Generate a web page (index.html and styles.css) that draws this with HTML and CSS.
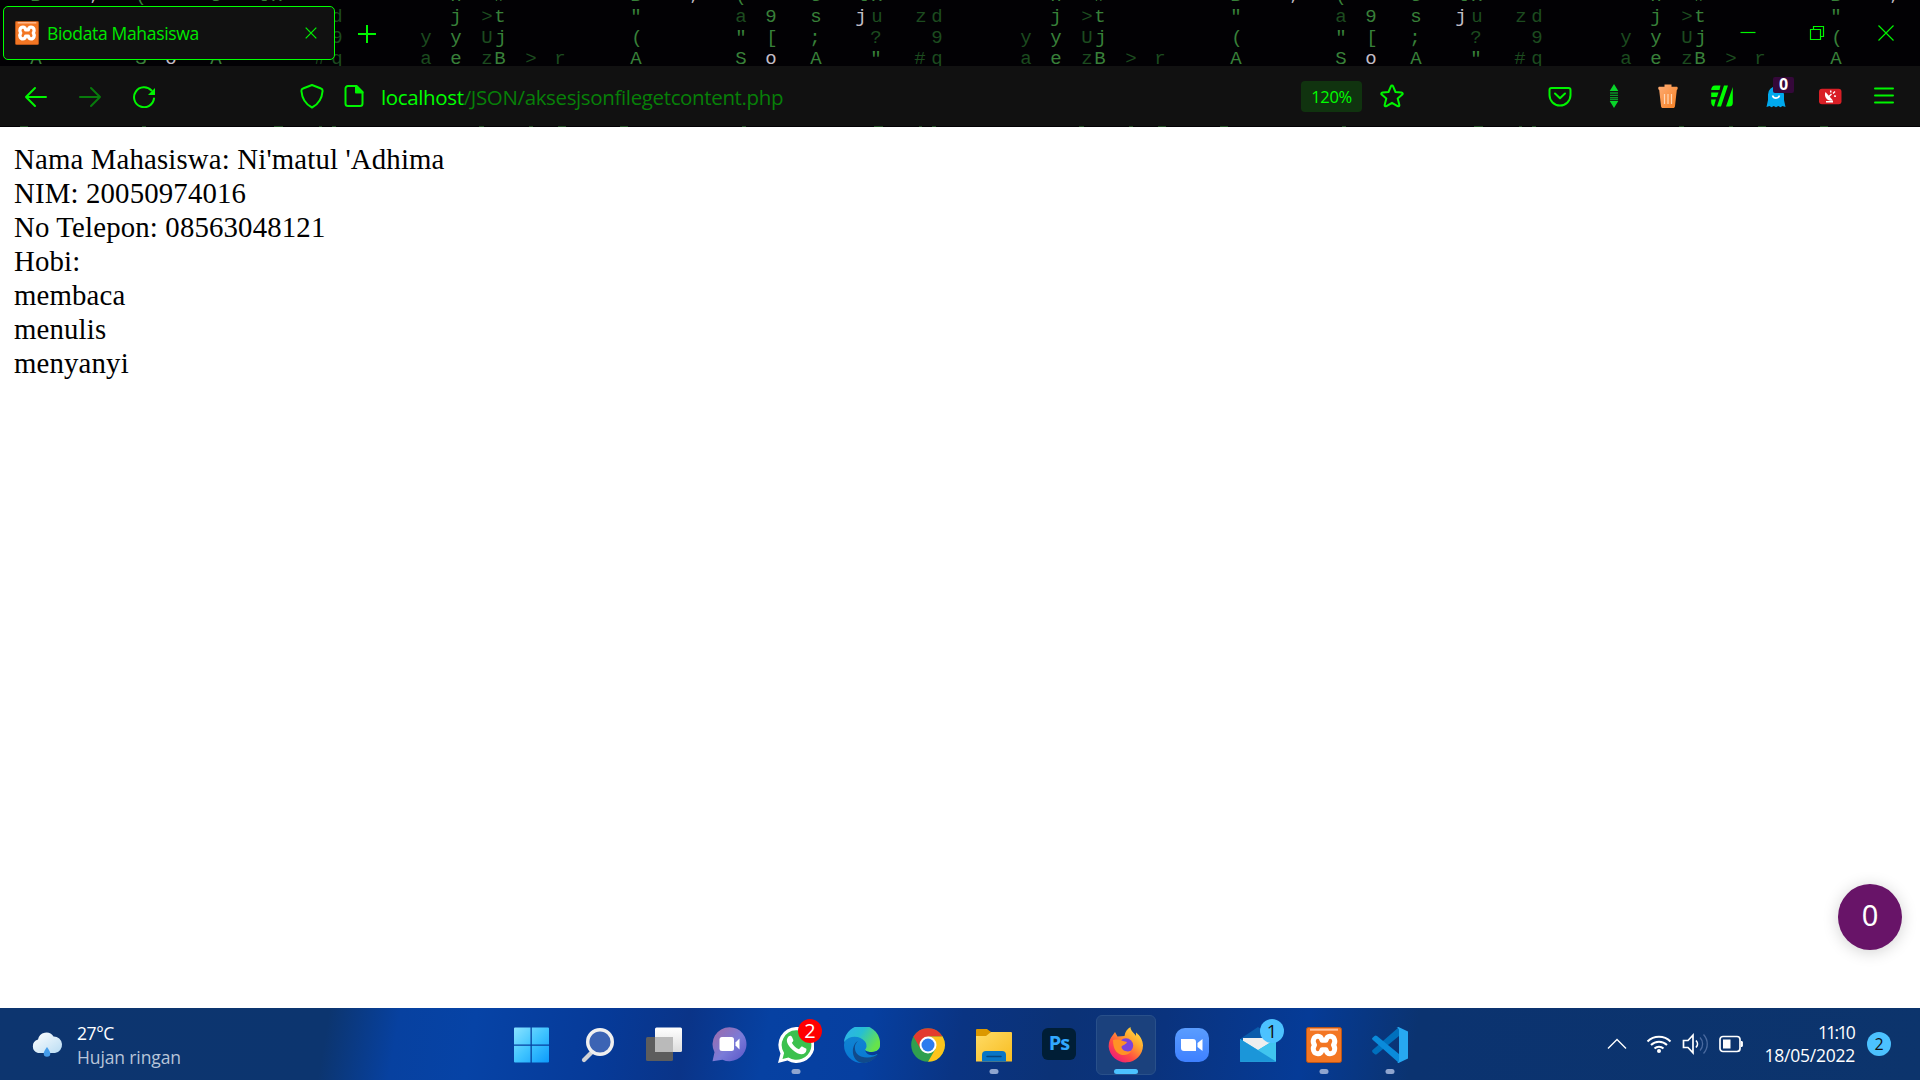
FILE: index.html
```html
<!DOCTYPE html>
<html lang="id">
<head>
<meta charset="utf-8">
<title>Biodata Mahasiswa</title>
<link rel="stylesheet" href="styles.css">
</head>
<body>
<div class="screen">
  <header class="chrome">
    <svg class="rain" width="1920" height="127" aria-hidden="true">
      <defs>
        <g id="rain-tile">
          <text class="g2" y="1"><tspan x="56">h</tspan><tspan x="100">#</tspan><tspan x="236">B</tspan><tspan x="341">(</tspan><tspan x="416">s</tspan><tspan x="462">l</tspan><tspan x="477">x</tspan></text>
          <text class="gw" y="0"><tspan x="146">.</tspan><tspan x="295">,</tspan><tspan x="371">'</tspan></text>
          <text class="g2" y="22"><tspan x="56">j</tspan><tspan x="100">t</tspan><tspan x="236">"</tspan><tspan x="371">9</tspan><tspan x="416">s</tspan></text>
          <text class="g1" y="22"><tspan x="87">&gt;</tspan><tspan x="341">a</tspan><tspan x="477">u</tspan><tspan x="521">z</tspan><tspan x="537">d</tspan></text>
          <text class="gw" y="22"><tspan x="461">j</tspan></text>
          <text class="g2" y="43"><tspan x="56">y</tspan><tspan x="101">j</tspan><tspan x="237">(</tspan><tspan x="341">"</tspan><tspan x="372">[</tspan><tspan x="415">;</tspan></text>
          <text class="g1" y="43"><tspan x="26">y</tspan><tspan x="87">U</tspan><tspan x="476">?</tspan><tspan x="537">9</tspan></text>
          <text class="g2" y="64"><tspan x="56">e</tspan><tspan x="100">B</tspan><tspan x="236">A</tspan><tspan x="341">S</tspan><tspan x="416">A</tspan><tspan x="476">"</tspan></text>
          <text class="g1" y="64"><tspan x="26">a</tspan><tspan x="87">z</tspan><tspan x="131">&gt;</tspan><tspan x="160">r</tspan><tspan x="520">#</tspan><tspan x="537">q</tspan></text>
          <text class="gw" y="64"><tspan x="371">o</tspan></text>
          <path d="M79 126.5h5m45 0h4m25 0h8m54 0h8m114 0h4m128 0h9m36 0h3m10 0h4" stroke="#1e4a20"/>
        </g>
      </defs>
      <use href="#rain-tile" x="-200"/><use href="#rain-tile" x="400"/><use href="#rain-tile" x="1000"/><use href="#rain-tile" x="1600"/>
    </svg>

    <div class="tabstrip">
      <div class="tab">
        <svg class="favicon" viewBox="0 0 36 36"><use href="#xampp"/></svg>
        <span class="tab-title">Biodata Mahasiswa</span>
        <svg width="12" height="12" viewBox="0 0 12 12" class="line thin"><path d="M.7.7l10.600 10.600M11.300.7L.7 11.300"/></svg>
      </div>
      <svg class="newtab line" width="18" height="18" viewBox="0 0 18 18"><path d="M9 .5v17M.5 9h17"/></svg>
      <div class="winctl">
        <svg width="16" height="16" viewBox="0 0 16 16" class="line thin"><path d="M.5 7.500h15"/></svg>
        <svg width="16" height="16" viewBox="0 0 16 16" class="line thin"><path d="M1.500 4.500h10v10h-10zM4.500 4.500v-3h10v10h-3"/></svg>
        <svg width="16" height="16" viewBox="0 0 16 16" class="line thin"><path d="M.5.5l15 15M15.500.5l-15 15"/></svg>
      </div>
    </div>

    <div class="toolbar">
      <div class="tools">
        <svg viewBox="0 0 24 24" class="line"><path d="M22 13H2M11 4L2 13l9 9"/></svg>
        <svg viewBox="0 0 24 24" class="line dim"><path d="M2 13h20M13 4l9 9-9 9"/></svg>
        <svg viewBox="0 0 24 24" class="line"><path d="M22 14.500a10 10 0 1 1-2.500-8"/><path d="M23 4v7h-7z" fill="#00f500" stroke="none"/></svg>
      </div>
      <div class="urlbar">
        <svg width="24" height="26" viewBox="0 0 24 26" class="line"><path d="M12 2l9 3.500c1.500.5 1.700 1 1.600 2.500C22 15 19 21 12 24.500 5 21 2 15 1.400 8c-.1-1.500.1-2 1.600-2.500z"/></svg>
        <svg class="page-ico line" width="20" height="24" viewBox="0 0 20 24"><path d="M4 2h8.500L18.500 8v11.500a2.500 2.500 0 0 1-2.500 2.500H4a2.500 2.500 0 0 1-2.500-2.500v-15A2.500 2.500 0 0 1 4 2z"/><path d="M12 2v6.500h6.500z" fill="#00f500"/></svg>
        <span class="url"><span class="host">localhost</span><span class="path">/JSON/aksesjsonfilegetcontent.php</span></span>
        <span class="zoom">120%</span>
        <svg width="24" height="24" viewBox="0 0 24 24" class="line"><path d="M12 1.500c.5 0 .9.300 1.100.8L15.500 8l6 .6c1.200.1 1.600 1.200.8 2L17.700 14.500l1.600 6.200c.3 1.300-.7 2-1.800 1.400L12 18.800l-5.500 3.300c-1.100.6-2.100-.1-1.800-1.400l1.600-6.200L1.700 10.600c-.8-.8-.4-1.900.8-2l6-.6L10.900 2.300c.2-.5.6-.8 1.100-.8z"/></svg>
      </div>
      <div class="tools">
        <svg viewBox="0 0 24 24" class="line"><path d="M3.500 4h17c1.300 0 2 .7 2 2v5a10.500 10.500 0 0 1-21 0V6c0-1.300.7-2 2-2z"/><path d="M7 9.500l5 4.700 5-4.700"/></svg>
        <svg viewBox="0 0 24 24"><path d="M12 0l4.300 7H7.700zM12 24l4.300-7H7.700z" fill="#09d42a"/><path d="M8 9h8M8 11.300h8M8 13.600h8M8 15.500h8" stroke="#0a9426" stroke-width="1.300"/></svg>
        <svg viewBox="0 0 24 24"><defs><linearGradient id="tr" x1="0" y1="0" x2="1" y2="1"><stop stop-color="#ffad75"/><stop offset="1" stop-color="#f58023"/></linearGradient></defs><path d="M8.500.5h7v2.200h5.500c1 0 1 3-.2 3.200L19 22c-.2 1.500-.8 2-2 2H7c-1.200 0-1.800-.5-2-2L3.200 5.900c-1.200-.2-1.200-3.200-.2-3.200h5.500z" fill="url(#tr)"/><path d="M8.500 10v10M12 10v10M15.500 10v10" stroke="#ffd7b5" stroke-width="1.200"/></svg>
        <svg viewBox="0 0 24 24" fill="#0f0"><path d="M5 1.500h5.500L9.500 6H1.200c0-2.500 1.500-4.500 3.800-4.500zM1.200 8.500h7.300L7 13H1.200zM1.200 15.500h4.700L4 22.500c-1.700-.5-2.800-2-2.800-4.500zM14 1.500h4l-7 21H7zM22.800 3v16c0 2.500-1.500 3.500-3.800 3.500h-3z"/></svg>
        <span class="ghost">
          <svg viewBox="0 0 24 24"><path d="M4 10.500a8 8 0 0 1 16 0V16l1.500 7-3-1-2 1.300-2.200-1.300-2.300 1.300L9.700 22l-2.200 1.300L5.500 22l-3 1L4 16z" fill="#00a9ee"/><path d="M8.500 11.500c1 3.500 6 3.500 7 0" fill="none" stroke="#fff" stroke-width="1.600"/></svg>
          <span class="ghost-count">0</span>
        </span>
        <svg viewBox="0 0 24 24"><rect x="1" y="4.800" width="22.500" height="15.500" rx="3" fill="#d91f26"/><path d="M7.500 8c-2 4.500 1.500 9.800 7.500 8.500z" fill="#fff"/><path d="M11 12.500l2.500-2.500M12.500 6.500l.5 2M15 9.500l2-2M16 12l2 .3M8 17.700h7" stroke="#fff" stroke-width="1.400"/></svg>
        <svg viewBox="0 0 24 24" class="line"><path d="M3 4.500h18M3 11.500h18M3 18.500h18"/></svg>
      </div>
    </div>
  </header>

  <main class="page">
    Nama Mahasiswa: Ni'matul 'Adhima<br>
    NIM: 20050974016<br>
    No Telepon: 08563048121<br>
    Hobi:<br>
    membaca<br>
    menulis<br>
    menyanyi
    <div class="bubble">0</div>
  </main>

  <footer class="taskbar">
    <div class="weather">
      <svg width="34" height="28" viewBox="0 0 34 28"><defs><linearGradient id="cl" x1="0" y1="0" x2="1" y2="1"><stop stop-color="#fff"/><stop offset="1" stop-color="#b9dcf3"/></linearGradient></defs><path d="M8 22a7 7 0 0 1 0-13.500 8.500 8.500 0 0 1 15.500-3A8.300 8.300 0 0 1 25 22z" fill="url(#cl)"/><path d="M17 16c2 3 3.300 4.700 3.300 6.500a3.300 3.300 0 0 1-6.600 0c0-1.800 1.300-3.500 3.300-6.500z" fill="#459deb"/></svg>
      <div class="weather-text"><div>27°C</div><div class="muted">Hujan ringan</div></div>
    </div>

    <div class="apps">
      <div class="app"><svg viewBox="0 0 36 36"><defs><linearGradient id="wn" gradientUnits="userSpaceOnUse" x1="0" y1="0" x2="36" y2="36"><stop stop-color="#8be3ff"/><stop offset=".5" stop-color="#3fc4ff"/><stop offset="1" stop-color="#0a98fb"/></linearGradient></defs><path d="M1 .5h15.500v17H0v-16a1 1 0 0 1 1-1zM17.800.5H34a1 1 0 0 1 1 1v16H17.800zM0 18.800h16.500v16.700H1a1 1 0 0 1-1-1zM17.800 18.800H35v15.700a1 1 0 0 1-1 1H17.800z" fill="url(#wn)"/></svg></div>
      <div class="app"><svg viewBox="0 0 36 36"><path d="M4 33l9-9" stroke="#d0d2d6" stroke-width="4.200" stroke-linecap="round"/><circle cx="20" cy="15" r="12.300" fill="#3c64b4" stroke="#f0f0f0" stroke-width="3.400"/></svg></div>
      <div class="app"><svg viewBox="0 0 36 36"><defs><linearGradient id="tv" x1="0" y1="0" x2="0" y2="1"><stop stop-color="#fff"/><stop offset="1" stop-color="#ddd"/></linearGradient></defs><rect x="0" y="10" width="27" height="24" rx="1.500" fill="#5d5d5d"/><rect x="9" y=".5" width="27" height="24.500" rx="1.500" fill="url(#tv)"/><path d="M9 10h18v15H9z" fill="#bababa"/></svg></div>
      <div class="app"><svg viewBox="0 0 36 36"><defs><linearGradient id="ct" x1="0" y1="0" x2="1" y2="1"><stop stop-color="#a06aa6"/><stop offset=".55" stop-color="#7a7bd8"/><stop offset="1" stop-color="#5955c8"/></linearGradient></defs><path d="M17.500.2a17 17 0 1 1-7 32.500L.5 34.200l2-9A17 17 0 0 1 17.500.2z" fill="url(#ct)"/><rect x="7.500" y="10" width="14.500" height="14" rx="2.500" fill="#fff"/><path d="M23.500 15.500l4-4v11l-4-4z" fill="#fff"/></svg></div>
      <div class="app running"><svg viewBox="0 0 36 36"><path d="M18 0a18 18 0 1 1-8.500 33.500L0 36l2.500-9.500A18 18 0 0 1 18 0z" fill="#fff"/><path d="M18 3.200a14.800 14.800 0 1 1-7.500 27.200L4.500 32l1.600-6A14.800 14.800 0 0 1 18 3.200z" fill="#3cc14e"/><path d="M10.500 9.500c1.500-1.500 3-.8 3.500.5l1.300 3c.3 1-.7 2-1.500 2.800 2 3.500 4 5.300 7.200 6.500l2-2.300c.6-.7 1.200-.5 2 0l3 1.600c1 .6.400 4-2 5.100-2.500 1.200-7 .1-11.500-4-5-4.600-7.500-9.700-4-13.200z" fill="#fff"/></svg><span class="badge red">2</span></div>
      <div class="app"><svg viewBox="0 0 36 36"><defs><linearGradient id="e1" x1="0" y1="0" x2="1" y2=".5"><stop stop-color="#2eaef0"/><stop offset=".5" stop-color="#27bfd2"/><stop offset="1" stop-color="#66e34b"/></linearGradient><linearGradient id="e2" x1="0" y1="0" x2="0" y2="1"><stop stop-color="#1389d0"/><stop offset="1" stop-color="#0878d5"/></linearGradient></defs><circle cx="18" cy="18" r="18" fill="url(#e2)"/><path d="M0 15A18 18 0 0 1 36 18c0 5-4 7-8.500 7-5 0-6.500-1.500-6.300-2.700 2-2 1.500-5.500-.2-7.800C16 8 5 8 0 15z" fill="url(#e1)"/><path d="M14 14c-5 4-4 13 3 15.500 6.500 2.300 14 .5 17.500-3C30 35 21 37.500 15 35 6 30 8 17 14 14z" fill="#114a8b"/><path d="M21.200 22.300c-.2 1.200 1.300 2.700 6.300 2.700 4 0 7-1.500 8.200-4.500V27H33c-6 3-12 0-11.800-4.700z" fill="#073c97"/></svg></div>
      <div class="app"><svg viewBox="0 0 36 36"><circle cx="18" cy="18" r="16.800" fill="#2f9f4e"/><path d="M3.500 9.600A16.800 16.800 0 0 1 32.600 9.600H18L10.700 22.200z" fill="#e33b2e"/><path d="M32.600 9.600A16.800 16.800 0 0 1 18 34.800l7.300-12.600L18 9.600z" fill="#fcc41c"/><circle cx="18" cy="18" r="8.500" fill="#fff"/><circle cx="18" cy="18" r="6.500" fill="#2d7cee"/></svg></div>
      <div class="app running"><svg viewBox="0 0 36 36"><defs><linearGradient id="fd" x1="0" y1="0" x2="1" y2="1"><stop stop-color="#ffdb66"/><stop offset="1" stop-color="#f8bd20"/></linearGradient></defs><path d="M0 3a1 1 0 0 1 1-1h10l4 3-3 6H0z" fill="#dc9800"/><path d="M0 9h10l5-4h20a1 1 0 0 1 1 1v28.500H0z" fill="url(#fd)"/><path d="M6 34.500V28a4 4 0 0 1 4-4h16a4 4 0 0 1 4 4v6.500z" fill="#0875c5"/><path d="M11 29.500h14" stroke="#07457c" stroke-width="1.500" stroke-linecap="round"/></svg></div>
      <div class="app"><span class="ps">Ps</span></div>
      <div class="app active"><svg viewBox="0 0 36 36"><defs><linearGradient id="ff" x1="1" y1="0" x2=".2" y2="1"><stop stop-color="#fff04a"/><stop offset=".4" stop-color="#ffa52d"/><stop offset=".7" stop-color="#ff4d43"/><stop offset="1" stop-color="#ed1580"/></linearGradient></defs><path d="M4.500 8.500L7 5l2.500 4.500 7-.5c.5-4 3-7.500 6-9 0 4 3.500 5.500 5.500 9V5.500c4 3 7 8 7 13A17.200 17.200 0 0 1 .7 20C.5 15 2 11.500 4.500 8.500z" fill="url(#ff)"/><circle cx="18" cy="18.500" r="7.200" fill="#7944dc"/><path d="M5 13c5-1 8 0 10 1l4 1c-1 3-5 3-5.500 5 .5 4 6 5.500 10 3.500-2 4-7 5.500-11 4S5 22 5 13z" fill="#ff9226"/></svg></div>
      <div class="app"><svg viewBox="0 0 36 36"><defs><linearGradient id="zm" x1="0" y1="0" x2="0" y2="1"><stop stop-color="#5a9dff"/><stop offset="1" stop-color="#3e80ff"/></linearGradient></defs><rect x="1" y="1" width="34" height="34" rx="10" fill="url(#zm)"/><path d="M7 12h12a3 3 0 0 1 3 3v9H10a3 3 0 0 1-3-3zM23.500 16l5-4v12l-5-4z" fill="#fff"/></svg></div>
      <div class="app"><svg viewBox="0 0 36 36"><path d="M0 12L18 0l18 12v13H0z" fill="#0a5bab"/><path d="M3 11h30v14L18 27 3 15z" fill="#eee"/><path d="M0 12l18 11 18-11v22.500H0z" fill="#28b7ea"/><path d="M0 34.500L36 12v22.500z" fill="#40c5ef"/><path d="M0 12l36 22.500H0z" fill="#1b96d9"/></svg><span class="badge blue">1</span></div>
      <div class="app running"><svg viewBox="0 0 36 36"><defs><g id="xampp"><rect x=".5" y=".5" width="35" height="35" rx="2" fill="#f37623" stroke="#b95518"/><path d="M4 2.700h28" stroke="#ffc09a" stroke-width="2"/><path d="M12 9.300c2.500 0 3.500 1.500 4 4h4c.5-2.500 1.500-4 4-4 4.500 0 6 5 3.500 8.700C30 21.700 28.500 26.700 24 26.700c-2.500 0-3.500-1.500-4-4h-4c-.5 2.500-1.500 4-4 4-4.500 0-6-5-3.500-8.700C6 14.300 7.500 9.300 12 9.300z" fill="#f37623" stroke="#fff" stroke-width="5" stroke-linejoin="round"/></g></defs><use href="#xampp"/></svg></div>
      <div class="app running"><svg viewBox="0 0 36 36"><path d="M27 0v9L5 27c-1 .8-1.700.7-2.500 0L.6 25.200c-.7-.7-.7-1.500 0-2.200z" fill="#0070bd"/><path d="M.6 10.700L2.500 9c.8-.8 1.500-.8 2.500 0l22 18v9L.6 12.800c-.7-.6-.7-1.500 0-2.100z" fill="#0a8bdb"/><path d="M26.500 0L36 4.500v27L26.500 36c-.5-.3-1.500-.5-2-1 1.500.5 2.500 0 2.500-2V3c0-1.500-1-2-2.500-2z" fill="#27a8f1"/></svg></div>
    </div>

    <div class="tray">
      <svg width="20" height="12" viewBox="0 0 20 12"><path d="M1 10.500L10 1.500l9 9" stroke-width="1.400"/></svg>
      <svg class="wifi" width="26" height="20" viewBox="0 0 26 20" stroke-width="2"><path d="M1.500 7.500a16.500 16.500 0 0 1 23 0M5 11a11.500 11.500 0 0 1 16 0M8.500 14.500a6.500 6.500 0 0 1 9 0"/><circle cx="13" cy="17" r="2" fill="#fff" stroke="none"/></svg>
      <svg class="vol" width="26" height="22" viewBox="0 0 26 22" stroke-width="1.700"><path d="M1.500 7.500H6l5-5.300v17.600l-5-5.300H1.500zM14 7.500a5 5 0 0 1 0 7"/><path d="M18 4.500c3.500 3.500 3.500 9.500 0 13M21.500 1.500c5 5.500 5 13.500 0 19" stroke="#4a6a9f" stroke-width="1.300"/></svg>
      <svg class="bat" width="25" height="18" viewBox="0 0 25 18" stroke-width="1.700"><rect x="1" y="1.500" width="20" height="15" rx="3"/><path d="M4 4.500h7.500v9H4zM22 6h1.500v6H22z" fill="#fff" stroke="none"/><path d="M23 7v4"/></svg>
      <div class="clock"><div class="time">11:10</div><div class="date">18/05/2022</div></div>
      <span class="count">2</span>
    </div>
  </footer>
</div>
</body>
</html>
```
FILE: styles.css
```css
* { box-sizing: border-box; }
body { margin: 0; background: #fff; overflow: hidden; }
.screen {
  width: 1920px; height: 1080px;
  display: flex; flex-direction: column;
  font-family: "Open Sans", "Noto Sans", sans-serif;
}
svg { display: block; flex: none; }

/* browser header */
.chrome { position: relative; height: 127px; background: #020104; flex: none; }
.rain { position: absolute; inset: 0; }
.rain text { font: 19px "Liberation Mono", monospace; text-anchor: middle; }
.g1 { fill: #1c4b1f; }
.g2 { fill: #388039; }
.gw { fill: #c2bec6; }
.tabstrip { position: relative; height: 66px; display: flex; align-items: center; padding-left: 3px; }
.tab {
  width: 332px; height: 54px; display: flex; align-items: center;
  padding: 0 17px 0 11px; background: #111; border: 1px solid #0f0; border-radius: 5px;
}
.favicon { width: 24px; height: 24px; }
.tab-title { flex: 1; margin-left: 8px; color: #00e800; font-size: 17.500px; letter-spacing: -.33px; white-space: nowrap; }
.line { fill: none; stroke: #00f500; stroke-width: 2; stroke-linecap: round; stroke-linejoin: round; }
.thin { stroke-width: 1.2; stroke-linecap: butt; stroke-linejoin: miter; }
.dim { stroke: #087b0c; }
.newtab { margin: 2px 0 0 23px; }
.winctl { margin-left: auto; display: flex; gap: 53px; padding-right: 26px; }

.toolbar { position: relative; height: 60px; background: #111; display: flex; align-items: center; padding: 0 9px; }
.tools { display: flex; align-items: center; }
.tools svg { width: 24px; height: 24px; margin: 0 15px; }
.urlbar { flex: 1; display: flex; align-items: center; padding: 0 129px; }
.page-ico { margin-left: 20px; }
.url { margin-left: 17px; padding-top: 2px; flex: 1; font-size: 20.500px; letter-spacing: -.36px; white-space: nowrap; }
.host { color: #0f0; }
.path { color: #078008; }
.zoom {
  width: 61px; height: 31px; border-radius: 4px; background: #10330f; color: #0f0;
  font-size: 16.500px; letter-spacing: -.4px; line-height: 31px; text-align: center; margin-right: 18px;
}
.ghost { position: relative; }
.ghost-count {
  position: absolute; left: 24px; top: -7px; width: 21px; height: 16px; border-radius: 2px;
  background: #35083a; color: #fff; font-weight: 700; font-size: 16px; line-height: 15px; text-align: center;
}

/* document */
.page {
  position: relative; flex: 1; padding: 15px 0 0 14px; background: #fff; color: #000;
  font: 28.800px/34px "Liberation Serif", serif; letter-spacing: .16px;
}
.bubble {
  position: absolute; right: 18px; bottom: 58px; width: 64px; height: 66px; border-radius: 50%;
  background: #681468; color: #fff; font: 29px/62px "Noto Sans", sans-serif; letter-spacing: 0; text-align: center;
  box-shadow: 0 2px 16px rgba(0, 0, 0, .18);
}

/* taskbar */
.taskbar {
  height: 72px; flex: none; display: flex; align-items: center; padding-top: 2px; color: #fff;
  background: linear-gradient(100deg, #0d356f 0, #0c356f 325px, #0741a0 395px, #0643a6 470px, #063a98 600px, #0a3488 680px, #0641a2 760px, #063fa0 860px, #0a3483 950px, #0b3276 1050px, #0a337e 1150px, #053b97 1290px, #0b3370 1400px, #0c346c 100%);
}
.weather { width: 502px; display: flex; align-items: center; padding-left: 30px; }
.weather-text { margin-left: 13px; font-size: 17.500px; line-height: 24px; letter-spacing: -.12px; }
.weather-text > :first-child { letter-spacing: -.4px; }
.muted { color: #b8c5d9; }
.apps { display: flex; gap: 6px; }
.app { position: relative; width: 60px; height: 60px; display: flex; align-items: center; justify-content: center; border-radius: 6px; }
.app > svg { width: 36px; height: 36px; }
.active { background: #1b417d; border: 1px solid #29508a; }
.running::after, .active::after {
  content: ""; position: absolute; left: 50%; bottom: 1px; width: 9px; height: 5px;
  transform: translateX(-50%); border-radius: 3px; background: #8fa5cf;
}
.active::after { width: 24px; bottom: 0; background: #4cc2ff; }
.badge { position: absolute; left: 32px; top: 4px; width: 24px; height: 24px; border-radius: 50%; font-size: 20px; line-height: 24px; text-align: center; }
.red { background: #f00; color: #fff; }
.blue { background: #4cc2ff; color: #111; font-size: 18px; }
.ps { width: 34px; height: 32px; margin: 0 2px 2px 0; border-radius: 6px; background: #001e36; color: #31a8ff; font: 700 20px/29px "Open Sans", sans-serif; letter-spacing: -1px; text-align: center; }
.tray { margin-left: auto; display: flex; align-items: center; padding: 0 29px 2px 0; }
.tray svg { fill: none; stroke: #fff; }
.wifi { margin-left: 19px; }
.vol { margin-left: 10px; }
.bat { margin-left: 11px; }
.clock { width: 111px; text-align: right; font-size: 17.500px; line-height: 23px; white-space: nowrap; }
.time { letter-spacing: -1.700px; padding-right: 1px; }
.date { letter-spacing: -.25px; }
.count { width: 24px; height: 24px; margin-left: 12px; border-radius: 50%; background: #4cc2ff; color: #111; font-size: 16px; line-height: 24px; text-align: center; }
```
